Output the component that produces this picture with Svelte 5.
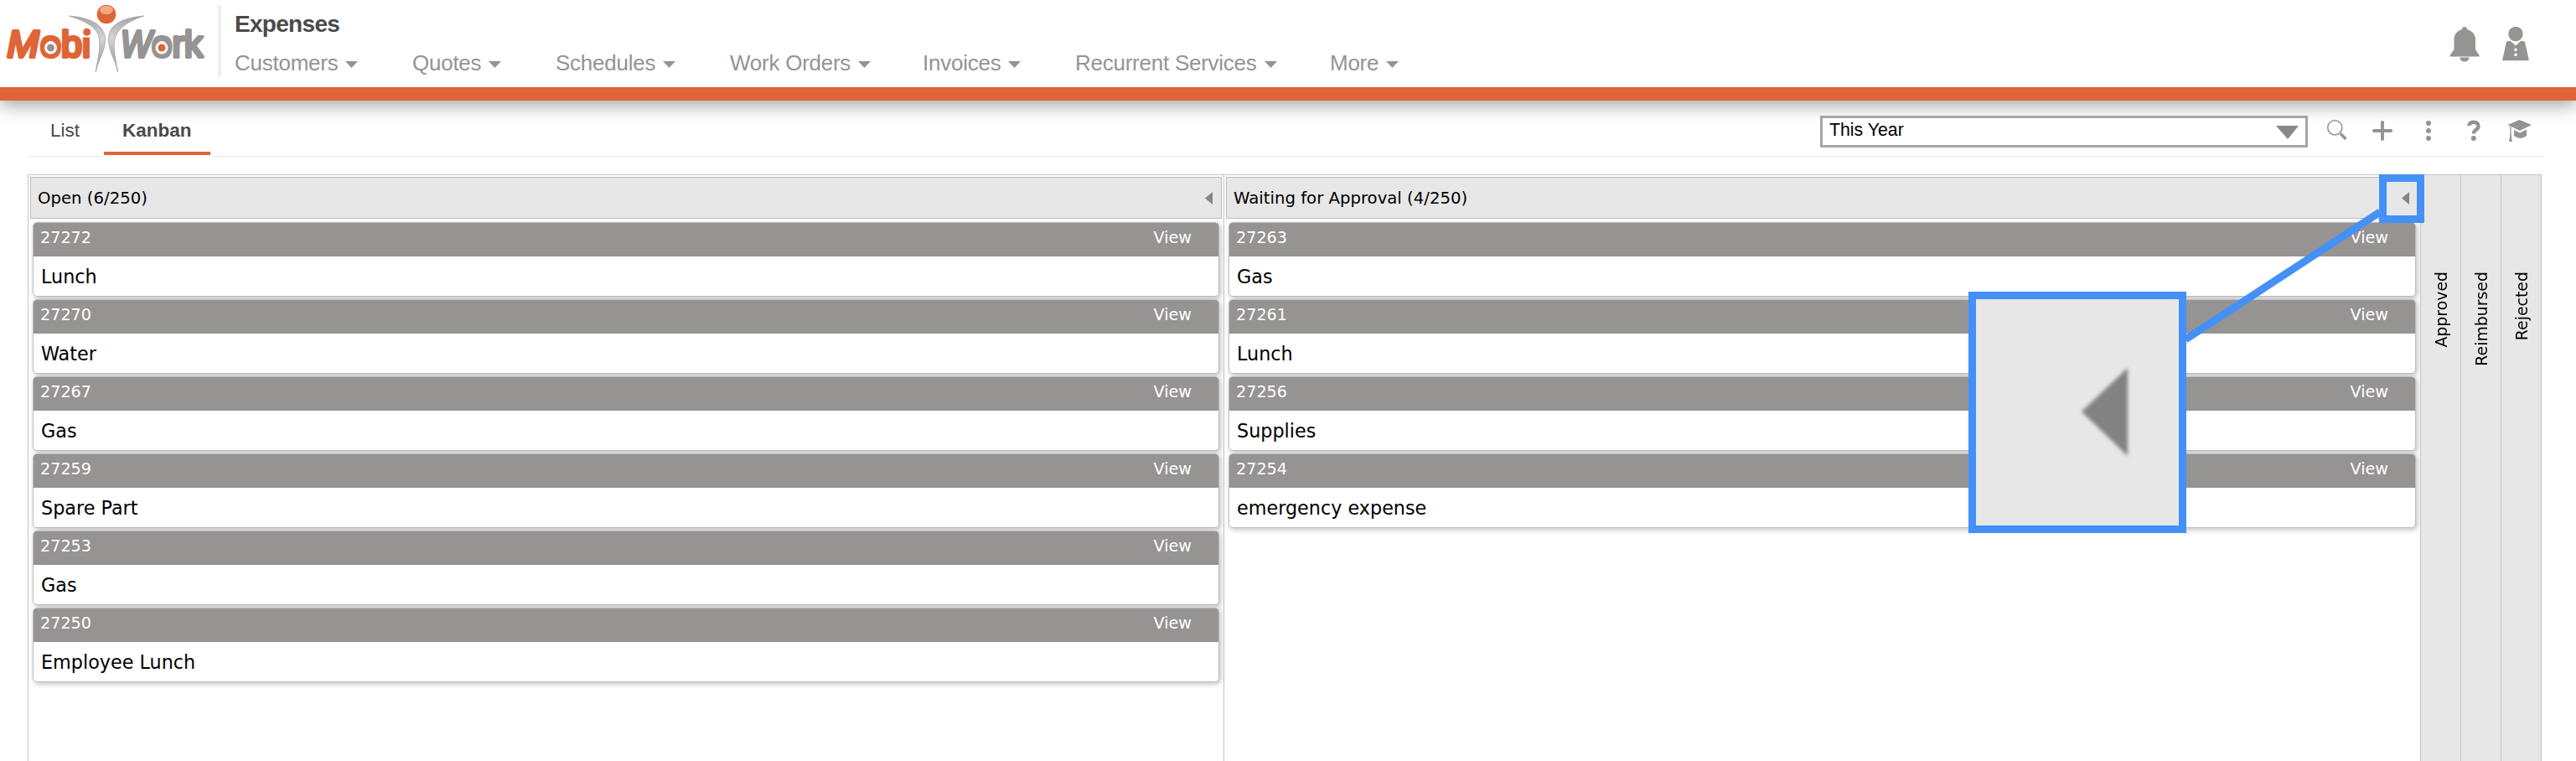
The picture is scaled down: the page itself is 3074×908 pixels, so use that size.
<script>
  const nav = ['Customers', 'Quotes', 'Schedules', 'Work Orders', 'Invoices', 'Recurrent Services', 'More'];
  const columns = [
    {
      title: 'Open (6/250)',
      cards: [
        ['27272', 'Lunch'],
        ['27270', 'Water'],
        ['27267', 'Gas'],
        ['27259', 'Spare Part'],
        ['27253', 'Gas'],
        ['27250', 'Employee Lunch']
      ]
    },
    {
      title: 'Waiting for Approval (4/250)',
      cards: [
        ['27263', 'Gas'],
        ['27261', 'Lunch'],
        ['27256', 'Supplies'],
        ['27254', 'emergency expense']
      ]
    }
  ];
  const collapsed = ['Approved', 'Reimbursed', 'Rejected'];
</script>

<div class="page">
  <header>
    <svg class="logo" width="260" height="96" viewBox="0 0 260 96">
      <defs>
        <linearGradient id="body" x1="0" y1="0" x2="0" y2="1">
          <stop offset="0" stop-color="#a5a5a7" />
          <stop offset=".4" stop-color="#d3d4d6" />
          <stop offset="1" stop-color="#8f8f91" />
        </linearGradient>
        <linearGradient id="shine" x1="0" y1="0" x2="0" y2="1">
          <stop offset="0" stop-color="#f3b08c" />
          <stop offset="1" stop-color="#f0a47c" />
        </linearGradient>
      </defs>
      <g class="word orange">
        <text x="8.500" y="68" font-size="45" font-style="italic" textLength="38" lengthAdjust="spacingAndGlyphs">M</text>
        <text x="48" y="68" font-size="45" textLength="60" lengthAdjust="spacingAndGlyphs">obi</text>
      </g>
      <path d="M98.500 30H111V44.500H98.500Z" fill="#fff" />
      <circle cx="103.700" cy="38.200" r="4.500" fill="#df6436" />
      <g class="word gray">
        <text x="144" y="68" font-size="45" font-style="italic" textLength="37" lengthAdjust="spacingAndGlyphs">W</text>
        <text x="181" y="68" font-size="45" textLength="61" lengthAdjust="spacingAndGlyphs">ork</text>
      </g>
      <circle cx="60.500" cy="57" r="7.500" fill="#fff" />
      <circle cx="60.500" cy="57" r="4.500" fill="#969393" />
      <circle cx="193" cy="57" r="7.500" fill="#fff" />
      <circle cx="193" cy="57" r="4.500" fill="#df6436" />
      <g fill="url(#body)" stroke="#9b9b9d" stroke-width=".7">
        <path d="M82.500 19C104 21 124 27 125.500 46C126 61 117 71 114.300 86C116 72 120 61 118.500 47C117 31 98 24 82.500 19Z" />
        <path d="M172 19C150 21 130 27 129.500 46C129 61 138 71 140.500 86C138.500 72 135 61 136.500 49C139 32 157 24 172 19Z" />
      </g>
      <circle cx="127" cy="17" r="11.300" fill="#df6436" />
      <ellipse cx="127" cy="12" rx="7.800" ry="5.200" fill="url(#shine)" />
    </svg>
    <div class="divider"></div>
    <div class="heading">
      <h1>Expenses</h1>
      <nav>
        {#each nav as item}
          <a><span>{item}</span><svg width="15" height="8" viewBox="0 0 15 8"><path d="M0 0H15L7.500 8Z" /></svg></a>
        {/each}
      </nav>
    </div>
    <div class="user">
      <svg width="36" height="44" viewBox="0 0 36 44">
        <path d="M18 1a3 3 0 0 1 3 3c6 2 10 6 10 12v12l4.500 7v1.500H.500V35L5.500 28V16c0-6 3.500-10 9.500-12a3 3 0 0 1 3-3Z" />
        <path d="M12.500 37.500h11c0 3-2.500 5-5.500 5s-5.500-2-5.500-5Z" />
      </svg>
      <svg width="32" height="44" viewBox="0 0 32 44">
        <circle cx="16" cy="9.500" r="8.700" />
        <path fill-rule="evenodd" d="M7 18H10L16 23.500 22 18H25Q27 18 27.300 20L31.700 40Q31.800 41.300 30.700 41.300H1.300Q.200 41.300.300 40L4.700 20Q5 18 7 18ZM16 26.500a1.800 1.800 0 1 0 .01 0ZM16 32.500a1.800 1.800 0 1 0 .01 0Z" />
      </svg>
    </div>
  </header>

  <div class="toolbar">
    <div class="tabs">
      <div class="tab">List</div>
      <div class="tab active">Kanban</div>
    </div>
    <div class="rule"></div>
    <div class="tools">
      <div class="select">
        <span>This Year</span>
        <svg width="27" height="16" viewBox="0 0 27 16"><path d="M0 0H27L14 16Z" /></svg>
      </div>
      <svg class="search" width="26" height="28" viewBox="0 0 26 28">
        <circle cx="10.300" cy="10.300" r="8.600" fill="none" stroke="#969393" stroke-width="1.500" />
        <path d="M17 17.500 23.500 24" fill="none" stroke="#969393" stroke-width="3.500" />
      </svg>
      <svg class="plus" width="26" height="28" viewBox="0 0 26 28">
        <path d="M13 4V24M3 14H23" fill="none" stroke="#969393" stroke-width="4" stroke-linecap="round" />
      </svg>
      <svg class="dots" width="8" height="28" viewBox="0 0 8 28">
        <circle cx="4" cy="5" r="3" /><circle cx="4" cy="14" r="3" /><circle cx="4" cy="23" r="3" />
      </svg>
      <svg class="help" width="18" height="28" viewBox="0 0 18 28">
        <path d="M3.300 8C3.500 2.300 14.500 2 14.500 8.500c0 4.500-5.600 4-5.600 9" fill="none" stroke="#969393" stroke-width="4.500" />
        <circle cx="8.800" cy="23" r="3" />
      </svg>
      <svg class="cap" width="30" height="28" viewBox="0 0 30 28">
        <path d="M14.500 1 29 7 15 14 .500 7Z" />
        <path d="M8 13 15 16.500 23 12.500V20Q15.500 26 8 20Z" />
        <path d="M4 9V26.500" fill="none" stroke="#969393" stroke-width="1.300" />
        <path d="M4 17 6 27H2Z" />
      </svg>
    </div>
  </div>

  <main>
    {#each columns as column}
      <section>
        <div class="title">
          <span>{column.title}</span>
          <svg width="9" height="15" viewBox="0 0 9 15"><path d="M0 7.500 9 0V15Z" /></svg>
        </div>
        <div class="cards">
          {#each column.cards as card}
            <article>
              <div class="top"><span>{card[0]}</span><span>View</span></div>
              <div class="name">{card[1]}</div>
            </article>
          {/each}
        </div>
      </section>
    {/each}
    {#each collapsed as name}
      <aside><span>{name}</span></aside>
    {/each}
  </main>

  <svg class="callout" width="544" height="428" viewBox="0 0 544 428">
    <path d="M491 45 259 197" fill="none" stroke="#4490f7" stroke-width="9" />
    <rect x="494.500" y="4.500" width="45" height="49" fill="none" stroke="#4490f7" stroke-width="9" />
    <rect x="4.500" y="144.500" width="251" height="279" fill="#e7e7e7" stroke="#4490f7" stroke-width="9" />
    <path class="soft" d="M135 283 190 231V336Z" />
  </svg>
</div>

<style>
  :global(body) { margin: 0; background: #fff; }
  .page {
    position: relative; width: 3074px; height: 908px; overflow: hidden;
    background: #fff; color: #000; font-family: "DejaVu Sans", sans-serif;
    display: flex; flex-direction: column;
  }
  svg { display: block; flex: none; fill: #969393; }
  header {
    position: relative; box-sizing: border-box; height: 120px; flex: none; display: flex;
    border-bottom: 16px solid #df6436; background: #fff;
    box-shadow: 0 6px 20px rgba(0, 0, 0, .35);
    font-family: "Liberation Sans", Arial, sans-serif;
  }
  .word { font-family: "Liberation Sans", Arial, sans-serif; stroke-width: 4; stroke-linejoin: round; }
  .orange { fill: #df6436; stroke: #df6436; }
  .gray { fill: #969393; stroke: #969393; }
  .divider { width: 4px; height: 86px; margin-top: 6px; background: #f0f0f0; }
  .heading { padding: 13px 0 0 16px; flex: 1; }
  h1 { margin: 0; font-size: 28px; line-height: 32px; letter-spacing: -.7px; color: #4a4a4a; }
  nav { display: grid; grid-template-columns: 212px 171px 208px 230px 182px 304px 100px; margin-top: 15px; }
  nav a { display: flex; align-items: center; gap: 9px; font-size: 26px; line-height: 30px; letter-spacing: -.25px; color: #969393; white-space: nowrap; }
  nav svg { margin-top: 4px; }
  .user { display: flex; gap: 27px; padding: 31px 56px 0 0; }
  .toolbar { height: 88px; flex: none; display: flex; align-items: flex-start; font-family: "Liberation Sans", Arial, sans-serif; padding: 0 38px 0 34px; }
  .tabs { display: flex; }
  .tab { box-sizing: border-box; height: 67px; padding: 23px 28px 0 26px; width: 88px; border-bottom: 1px solid #e6e6e6; font-size: 22.500px; line-height: 26px; color: #4a4a4a; }
  .tab.active { position: relative; height: 65px; width: 131px; padding: 23px 0 0 24px; border: 0; font-weight: bold; }
  .tab.active::after { content: ""; position: absolute; left: 2px; right: 2px; bottom: 0; height: 4px; background: #df6436; }
  .rule { flex: 1; height: 66px; border-bottom: 1px solid #e6e6e6; }
  .tools { display: flex; align-items: center; height: 66px; border-bottom: 1px solid #e6e6e6; width: 864px; }
  .select { box-sizing: border-box; width: 582px; height: 38px; margin-top: 8px; border: 3px solid #a6a6a6; background: #fff; display: flex; align-items: center; justify-content: space-between; padding: 0 8px; font-size: 21.300px; line-height: 30px; position: relative; }
  .select span { margin-top: -4px; }
  .select svg { fill: #888; margin-top: 1px; }
  .tools > svg { margin-top: 6px; }
  .search { margin-left: 22px; }
  .plus { margin-left: 28px; }
  .dots { margin-left: 38px; }
  .help { margin-left: 41px; }
  .cap { margin-left: 31px; }
  main { flex: none; height: 700px; margin-left: 33px; width: 3000px; box-sizing: border-box; border-top: 1px solid #c4c4c4; border-right: 1px solid #c4c4c4; display: grid; grid-template-columns: 1427px 1428px 48px 48px 48px; }
  section { border-left: 1px solid #c4c4c4; padding: 2px 2px 0; }
  .title { box-sizing: border-box; height: 50px; border: 1px solid #bdbdbd; background: #e7e7e7; display: flex; align-items: center; justify-content: space-between; padding: 0 10px 0 8px; font-size: 19.700px; line-height: 24px; }
  .title span { margin-top: 1px; }
  .title svg { margin-top: 1px; fill: #858585; }
  .cards { display: flex; flex-direction: column; gap: 3px; padding: 4px 3px 0; }
  article { box-sizing: border-box; height: 89px; border: 1px solid #bdbdbd; border-radius: 5px; background: #fff; box-shadow: 2px 2px 6px rgba(0, 0, 0, .25); overflow: hidden; }
  .top { box-sizing: border-box; height: 40px; background: #969393; color: #fff; display: flex; justify-content: space-between; padding: 6px 32px 0 8px; font-size: 19.200px; line-height: 24px; }
  .name { padding: 10px 9px; font-size: 22.300px; line-height: 28px; }
  aside { border-left: 1px solid #c4c4c4; background: #e7e7e7; padding-top: 115px; }
  aside span { display: block; writing-mode: vertical-rl; transform: rotate(180deg); width: 49px; line-height: 49px; font-size: 18.900px; }
  .callout { position: absolute; left: 2349px; top: 208px; }
  .callout rect { shape-rendering: crispEdges; }
  .soft { fill: #828282; filter: blur(2px); }
</style>
